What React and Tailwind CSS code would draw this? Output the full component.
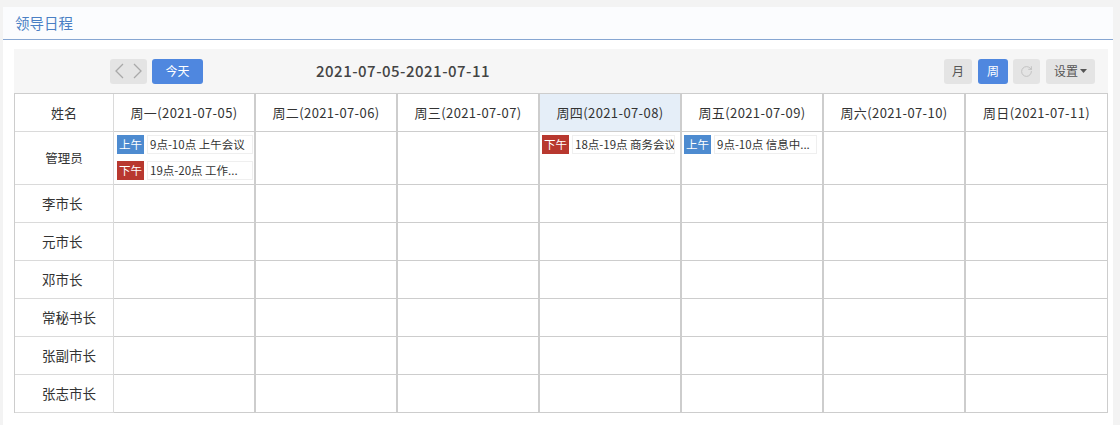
import React from "react";
import { RotateCw } from "lucide-react";

const F = { fontFamily: '"Noto Sans CJK SC", "Noto Sans", sans-serif' };

const days = [
  "周一(2021-07-05)",
  "周二(2021-07-06)",
  "周三(2021-07-07)",
  "周四(2021-07-08)",
  "周五(2021-07-09)",
  "周六(2021-07-10)",
  "周日(2021-07-11)",
];

const names = ["李市长", "元市长", "邓市长", "常秘书长", "张副市长", "张志市长"];

function Ev({ am, text }) {
  return (
    <div className="flex h-[19px] w-full items-stretch">
      <div
        className={
          "flex w-[27px] shrink-0 items-center justify-center whitespace-nowrap text-[11.5px] leading-none text-white " +
          (am ? "bg-[#4d8bd0]" : "bg-[#b8382f]")
        }
      >
        {am ? "上午" : "下午"}
      </div>
      <div className="ml-[3px] flex min-w-0 flex-1 items-center overflow-hidden whitespace-nowrap border border-[#efefef] bg-white px-[2px] text-[11.5px] leading-none text-[#333]">
        {text}
      </div>
    </div>
  );
}

function DayCell({ i, children, h, header }) {
  return (
    <div
      className={
        "min-w-0 border-b border-r border-[#cdcdcd] " +
        (i < 6 ? "border-r-2 " : "") +
        h +
        (header && i === 3 ? " bg-[#e5eef8]" : " bg-white")
      }
    >
      {children}
    </div>
  );
}

export default function App() {
  return (
    <div style={F} className="h-[425px] w-[1120px] overflow-hidden bg-[#f3f3f3] pl-[3px] pt-[7px]">
      <div className="h-[418px] w-[1110px] bg-white">
        <div className="flex h-[33px] items-center border-b border-[#86a6d2] bg-[#fbfcfe] pl-[12px] text-[14.5px] text-[#4a7fc4]">
          领导日程
        </div>
        <div className="pl-[11px] pr-[5px] pt-[9px]">
          <div className="flex h-[44px] w-[1094px] items-center bg-[#f6f6f6] pl-[96px] pr-[13px]">
            <div className="flex h-[25px] w-[37px] items-center justify-center gap-[3px] rounded-[3px] bg-[#e4e4e4]">
              <svg width="14" height="18" viewBox="0 0 14 18">
                <path d="M10 2 L3 9 L10 16" fill="none" stroke="#a9a9a9" strokeWidth="1.3" />
              </svg>
              <svg width="14" height="18" viewBox="0 0 14 18">
                <path d="M4 2 L11 9 L4 16" fill="none" stroke="#a9a9a9" strokeWidth="1.3" />
              </svg>
            </div>
            <div className="ml-[5px] flex h-[25px] w-[51px] items-center justify-center rounded-[3px] bg-[#4f87df] text-[12px] text-white">
              今天
            </div>
            <div className="ml-[113px] text-[15px] font-medium tracking-[0.5px] text-[#444]">2021-07-05-2021-07-11</div>
            <div className="flex-1" />
            <div className="flex h-[25px] w-[28px] items-center justify-center rounded-[3px] bg-[#e4e4e4] text-[12px] text-[#555]">
              月
            </div>
            <div className="ml-[6px] flex h-[25px] w-[30px] items-center justify-center rounded-[3px] bg-[#4f87df] text-[12px] text-white">
              周
            </div>
            <div className="ml-[5px] flex h-[25px] w-[27px] items-center justify-center rounded-[3px] bg-[#e4e4e4]">
              <RotateCw size={13} strokeWidth={1.6} color="#bdbdbd" />
            </div>
            <div className="ml-[6px] flex h-[25px] w-[49px] items-center justify-center gap-[2px] rounded-[3px] bg-[#e4e4e4] text-[12px] text-[#555]">
              设置
              <svg width="7" height="4" viewBox="0 0 7 4">
                <path d="M0 0 L7 0 L3.5 4 Z" fill="#555" />
              </svg>
            </div>
          </div>

          <div className="grid w-[1094px] grid-cols-[99px_repeat(7,minmax(0,1fr))] border-l border-t border-[#cdcdcd] text-[#333]">
            <div className="flex h-[38px] items-center justify-center border-b border-r border-[#dadada] text-[13px]">
              姓名
            </div>
            {days.map((d, i) => (
              <DayCell key={d} i={i} h="h-[38px]" header>
                <div className="flex h-full items-center justify-center whitespace-nowrap text-[13px] tracking-[0.4px]">{d}</div>
              </DayCell>
            ))}

            <div className="flex h-[53px] items-center justify-center border-b border-r border-[#dadada] text-[12.5px]">
              管理员
            </div>
            {days.map((d, i) => (
              <DayCell key={"a" + i} i={i} h="h-[53px]">
                {i === 0 && (
                  <div className="flex flex-col gap-[7px] pl-[3px] pr-[1px] pt-[3px]">
                    <Ev am text="9点-10点 上午会议" />
                    <Ev text="19点-20点 工作..." />
                  </div>
                )}
                {i === 3 && (
                  <div className="pl-[2px] pr-[5px] pt-[3px]">
                    <Ev text="18点-19点 商务会议" />
                  </div>
                )}
                {i === 4 && (
                  <div className="pl-[2px] pr-[5px] pt-[3px]">
                    <Ev am text="9点-10点 信息中..." />
                  </div>
                )}
              </DayCell>
            ))}

            {names.map((n) => (
              <React.Fragment key={n}>
                <div className="flex h-[38px] items-center border-b border-r border-[#dadada] pl-[27px] text-[13.5px]">
                  {n}
                </div>
                {days.map((d, i) => (
                  <DayCell key={n + i} i={i} h="h-[38px]" />
                ))}
              </React.Fragment>
            ))}
          </div>
        </div>
      </div>
    </div>
  );
}
